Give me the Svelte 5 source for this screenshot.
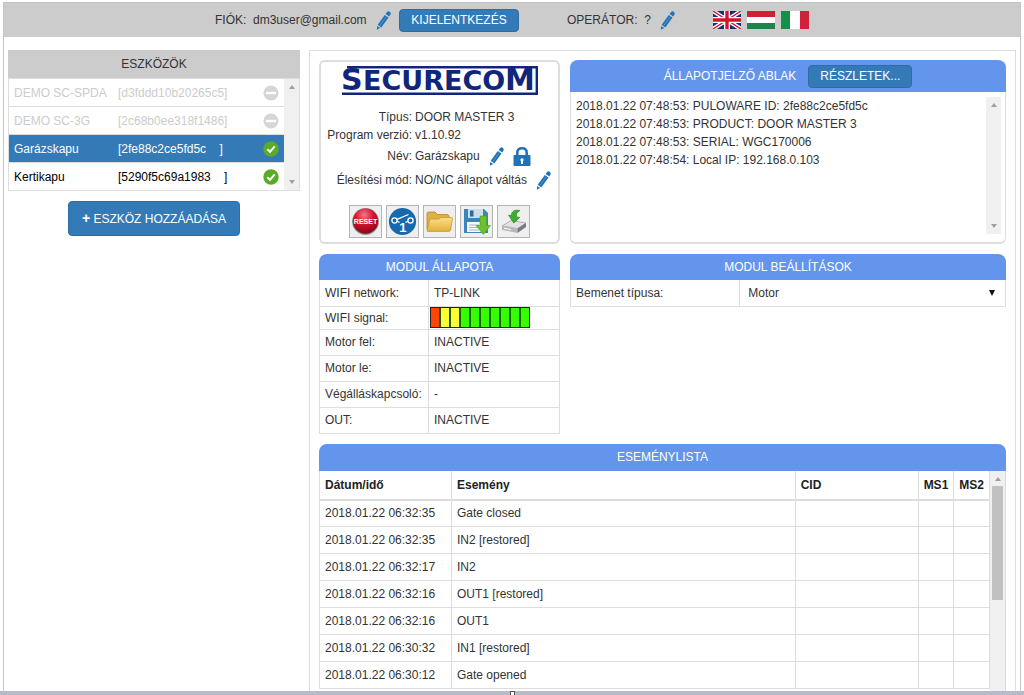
<script lang="ts">
    let devices = [
        { name: "DEMO SC-SPDA", id: "[d3fddd10b20265c5]", online: false },
        { name: "DEMO SC-3G", id: "[2c68b0ee318f1486]", online: false },
        { name: "Garázskapu", id: "[2fe88c2ce5fd5c    ]", online: true },
        { name: "Kertikapu", id: "[5290f5c69a1983    ]", online: true },
    ];
    let selected = 2;

    const log = [
        "2018.01.22 07:48:53: PULOWARE ID: 2fe88c2ce5fd5c",
        "2018.01.22 07:48:53: PRODUCT: DOOR MASTER 3",
        "2018.01.22 07:48:53: SERIAL: WGC170006",
        "2018.01.22 07:48:54: Local IP: 192.168.0.103",
    ];

    const signal = ["red", "yellow", "yellow", "green", "green", "green", "green", "green", "green", "green"];

    const states = [
        ["Motor fel:", "INACTIVE"],
        ["Motor le:", "INACTIVE"],
        ["Végálláskapcsoló:", "-"],
        ["OUT:", "INACTIVE"],
    ];

    const events = [
        ["2018.01.22 06:32:35", "Gate closed"],
        ["2018.01.22 06:32:35", "IN2 [restored]"],
        ["2018.01.22 06:32:17", "IN2"],
        ["2018.01.22 06:32:16", "OUT1 [restored]"],
        ["2018.01.22 06:32:16", "OUT1"],
        ["2018.01.22 06:30:32", "IN1 [restored]"],
        ["2018.01.22 06:30:12", "Gate opened"],
    ];

    let inputType = "Motor";
</script>

{#snippet pencil(label: string)}
    <button class="icon" aria-label={label}>
        <svg width="15" height="19" viewBox="0 0 15 19">
            <path fill="#2272b6" d="M.8 18.8 1.2 14.9 4.2 17.1zM1.7 13.8 8.8 3.9 12.5 6.5 5.3 16.4zM9.6 2.9 11.1 1Q12.2-.2 13.7.8 15.2 2 14.5 3.5L13.2 5.5z" />
            <path stroke="#6ba6d8" stroke-width=".7" d="M3.8 14.6 10.6 5.2" />
        </svg>
    </button>
{/snippet}

{#snippet arrow(dir: string)}
    <svg width="6" height="4" viewBox="0 0 6 4">
        <path d={dir === "up" ? "M0 4 3 0 6 4z" : "M0 0 3 4 6 0z"} fill="#a0a0a0" />
    </svg>
{/snippet}

<div class="app">
    <div class="page">
        <header>
            <span class="account">FIÓK: &nbsp;dm3user@gmail.com</span>
            {@render pencil("Fiók szerkesztése")}
            <button class="btn logout">KIJELENTKEZÉS</button>
            <span class="operator">OPERÁTOR: &nbsp;?</span>
            {@render pencil("Operátor szerkesztése")}
            <div class="flags">
                <button class="icon" aria-label="English">
                    <svg width="28" height="18" viewBox="0 0 28 18">
                        <rect width="28" height="18" fill="#1c2a78" />
                        <path d="M0 0 28 18M28 0 0 18" stroke="#fff" stroke-width="4" />
                        <path d="M0 0 28 18M28 0 0 18" stroke="#d0142c" stroke-width="1.4" />
                        <path d="M14 0V18M0 9H28" stroke="#fff" stroke-width="6" />
                        <path d="M14 0V18M0 9H28" stroke="#d0142c" stroke-width="3.4" />
                    </svg>
                </button>
                <button class="icon" aria-label="Magyar">
                    <svg width="28" height="18" viewBox="0 0 28 18">
                        <rect width="28" height="18" fill="#fff" />
                        <rect width="28" height="6" fill="#d21f35" />
                        <rect y="12" width="28" height="6" fill="#23824c" />
                    </svg>
                </button>
                <button class="icon" aria-label="Italiano">
                    <svg width="28" height="18" viewBox="0 0 28 18">
                        <rect width="28" height="18" fill="#fff" />
                        <rect width="9" height="18" fill="#159048" />
                        <rect x="19" width="9" height="18" fill="#d0203a" />
                    </svg>
                </button>
            </div>
        </header>

        <div class="content">
            <aside>
                <h2 class="grey">ESZKÖZÖK</h2>
                <div class="devices">
                    <ul>
                        {#each devices as device, i}
                            <li>
                                <button
                                    class="device"
                                    class:offline={!device.online}
                                    class:selected={i === selected}
                                    on:click={() => selected = i}
                                >
                                    <span class="name">{device.name}</span>
                                    <span class="id">{device.id}</span>
                                    <svg width="16" height="16" viewBox="0 0 16 16">
                                        {#if device.online}
                                            <circle cx="8" cy="8" r="7.7" fill="#5bab26" />
                                            <path d="M4.3 8.3 7 10.8 11.7 5.4" fill="none" stroke="#fff" stroke-width="2" />
                                        {:else}
                                            <circle cx="8" cy="8" r="7.5" fill="#d6d6d6" />
                                            <rect x="3" y="6.8" width="10" height="2.4" fill="#fff" />
                                        {/if}
                                    </svg>
                                </button>
                            </li>
                        {/each}
                    </ul>
                    <div class="scrollbar">
                        {@render arrow("up")}
                        {@render arrow("down")}
                    </div>
                </div>
                <button class="btn add"><b>+</b> ESZKÖZ HOZZÁADÁSA</button>
            </aside>

            <main>
                <div class="cards">
                    <section class="card product">
                        <svg class="logo" width="198" height="36" viewBox="0 -3 198 36" role="img" aria-label="Securecom">
                            <g fill="#10267c">
                                <path d="M6 0H197V29H1V26.6H194.6V2.6H6z" />
                                <text x="0" y="24" font-size="30">S</text>
                                <text x="22" y="24" font-size="27">ECURECO</text>
                                <text x="164" y="24" font-size="30">M</text>
                            </g>
                        </svg>
                        <dl>
                            <dt>Típus:</dt>
                            <dd>DOOR MASTER 3</dd>
                            <dt>Program verzió:</dt>
                            <dd>v1.10.92</dd>
                            <dt class="tall">Név:</dt>
                            <dd class="tall">
                                Garázskapu
                                {@render pencil("Név szerkesztése")}
                                <button class="icon" aria-label="Jelszó">
                                    <svg width="18" height="19" viewBox="0 0 18 19">
                                        <path d="M4.3 9V5.8Q4.3 1.3 9 1.3 13.7 1.3 13.7 5.8V9" fill="none" stroke="#2272b6" stroke-width="2.6" />
                                        <rect x="0.5" y="8" width="17" height="11" rx="1" fill="#2272b6" />
                                        <path d="M9 11.2a1.7 1.7 0 0 1 1 3V17H8v-2.8a1.7 1.7 0 0 1 1-3z" fill="#fff" />
                                    </svg>
                                </button>
                            </dd>
                            <dt class="tall">Élesítési mód:</dt>
                            <dd class="tall">
                                NO/NC állapot váltás
                                {@render pencil("Mód szerkesztése")}
                            </dd>
                        </dl>
                        <div class="tools">
                            <button aria-label="Reset">
                                <svg width="29" height="29" viewBox="0 0 29 29">
                                    <defs>
                                        <radialGradient id="ball" cx=".45" cy=".25" r=".8">
                                            <stop offset="0" stop-color="#f0788c" />
                                            <stop offset=".45" stop-color="#d4142f" />
                                            <stop offset="1" stop-color="#7c0515" />
                                        </radialGradient>
                                    </defs>
                                    <circle cx="14.5" cy="14.5" r="13.4" fill="#8f8f93" />
                                    <circle cx="14.5" cy="14.2" r="12.6" fill="url(#ball)" />
                                    <text x="14.5" y="17" font-size="7" text-anchor="middle" fill="#fff">RESET</text>
                                </svg>
                            </button>
                            <button aria-label="Kimenet 1">
                                <svg width="29" height="29" viewBox="0 0 29 29">
                                    <circle cx="14.5" cy="14.5" r="13.6" fill="#1769ad" />
                                    <g fill="none" stroke="#fff" stroke-width="1.3">
                                        <circle cx="6.5" cy="13.5" r="2.6" />
                                        <circle cx="22.5" cy="13.5" r="2.6" />
                                        <path d="M9 12.4 20.5 7.5M9 14 11.5 15.5M20 14.2 17.5 15.5" />
                                    </g>
                                    <text x="14.8" y="25" font-size="13" text-anchor="middle" fill="#fff">1</text>
                                </svg>
                            </button>
                            <button aria-label="Megnyitás">
                                <svg width="29" height="29" viewBox="0 0 29 29">
                                    <defs>
                                        <linearGradient id="folder" x2="0" y2="1">
                                            <stop offset="0" stop-color="#fbe08a" />
                                            <stop offset="1" stop-color="#e3b03a" />
                                        </linearGradient>
                                    </defs>
                                    <path d="M2 22V6.5Q2 5 3.5 5H10L12.5 7.5H22Q24 7.5 24 9.5V22z" fill="#dfb04a" stroke="#b98722" stroke-width=".8" />
                                    <path d="M2 24 4.5 13Q5 12 6.2 12L14 12 16 10.5H26Q28 10.5 27.4 12L25.6 23Q25.2 24.4 23.8 24.4H3Q2 24.4 2 24z" fill="url(#folder)" stroke="#c99529" stroke-width=".8" />
                                </svg>
                            </button>
                            <button aria-label="Mentés">
                                <svg width="29" height="29" viewBox="0 0 29 29">
                                    <path d="M2 2H22L26 6V26H2z" fill="#3a86bb" />
                                    <rect x="6" y="2" width="15" height="9" fill="#c9dfec" />
                                    <rect x="8" y="3.5" width="3.5" height="6" fill="#286a9b" />
                                    <rect x="5" y="15" width="18" height="10" fill="#fafafa" />
                                    <path d="M7 18H17M7 20.5H17M7 23H17" stroke="#a9b4bb" />
                                    <path d="M18 9H24.5V18.5H28.5L21.3 27.5 14 18.5H18z" fill="#6cc12f" stroke="#4c9d1c" stroke-width=".6" />
                                </svg>
                            </button>
                            <button aria-label="Letöltés">
                                <svg width="29" height="29" viewBox="0 0 29 29">
                                    <path d="M3 19 12 13.5 27 16 18.5 21.5z" fill="#e2e3e6" stroke="#8d8f94" stroke-width=".6" />
                                    <path d="M3 19 18.5 21.5V26L3 22.8z" fill="#b4b7bc" />
                                    <path d="M18.5 21.5 27 16V20L18.5 26z" fill="#777a80" />
                                    <path d="M5 21.2 12 22.6" stroke="#fff" stroke-width="1" />
                                    <path d="M21 3.5C16 2.5 12.5 4 12.4 8.6L9.6 8.2 14.8 16 20.8 10.5 17.4 9.8C17 7 18 5 21 3.5z" fill="#3fae2f" stroke="#268c1c" stroke-width=".7" />
                                </svg>
                            </button>
                        </div>
                    </section>

                    <section class="card status">
                        <div class="title">
                            <h2>ÁLLAPOTJELZŐ ABLAK</h2>
                            <button class="btn details">RÉSZLETEK...</button>
                        </div>
                        <div class="log">
                            <div class="lines">
                                {#each log as line}
                                    <p>{line}</p>
                                {/each}
                            </div>
                            <div class="scrollbar">
                                {@render arrow("up")}
                                {@render arrow("down")}
                            </div>
                        </div>
                    </section>

                    <section>
                        <h2 class="blue">MODUL ÁLLAPOTA</h2>
                        <table class="module">
                            <tbody>
                                <tr>
                                    <th>WIFI network:</th>
                                    <td>TP-LINK</td>
                                </tr>
                                <tr class="wifi">
                                    <th>WIFI signal:</th>
                                    <td>
                                        <div class="signal" role="img" aria-label="WIFI signal">
                                            {#each signal as color}
                                                <i class={color}></i>
                                            {/each}
                                        </div>
                                    </td>
                                </tr>
                                {#each states as [label, value]}
                                    <tr>
                                        <th>{label}</th>
                                        <td>{value}</td>
                                    </tr>
                                {/each}
                            </tbody>
                        </table>
                    </section>

                    <section>
                        <h2 class="blue">MODUL BEÁLLÍTÁSOK</h2>
                        <div class="setting">
                            <label for="input-type">Bemenet típusa:</label>
                            <div class="select">
                                <select id="input-type" bind:value={inputType}>
                                    <option>Motor</option>
                                </select>
                                <svg width="6" height="6" viewBox="0 0 6 6"><path d="M0 0H6L3 6z" fill="#111" /></svg>
                            </div>
                        </div>
                    </section>
                </div>

                <section class="events">
                    <h2 class="blue">ESEMÉNYLISTA</h2>
                    <div class="list">
                        <table>
                            <thead>
                                <tr>
                                    <th class="date">Dátum/idő</th>
                                    <th>Esemény</th>
                                    <th class="cid">CID</th>
                                    <th class="ms">MS1</th>
                                    <th class="ms">MS2</th>
                                </tr>
                            </thead>
                            <tbody>
                                {#each events as [date, text]}
                                    <tr>
                                        <td>{date}</td>
                                        <td>{text}</td>
                                        <td></td>
                                        <td></td>
                                        <td></td>
                                    </tr>
                                {/each}
                            </tbody>
                        </table>
                        <div class="scrollbar long">
                            {@render arrow("up")}
                            <div class="thumb"></div>
                        </div>
                    </div>
                </section>
            </main>
        </div>
    </div>
    <footer><span></span></footer>
</div>

<style>
    :global(body) {
        margin: 0;
        background-color: #fff;
    }

    * {
        box-sizing: border-box;
    }

    .app {
        height: 100vh;
        padding-top: 2px;
        display: flex;
        flex-direction: column;
        overflow: hidden;

        font-family: "Liberation Sans", Arial, sans-serif;
        font-size: 12px;
        line-height: 18px;
        color: #333;
    }

    .page {
        flex: 1;
        min-height: 0;
        margin: 0 3px;
        display: flex;
        flex-direction: column;

        border: 1px solid #c4c4c4;
        border-bottom: none;
    }

    button,
    select {
        font: inherit;
        color: inherit;
        cursor: pointer;
    }
    h2,
    p,
    ul,
    dl,
    dd {
        margin: 0;
        padding: 0;
        font-size: 12px;
        font-weight: normal;
    }
    svg {
        display: block;
        flex: none;
    }
    .icon {
        padding: 0;
        border: none;
        background: none;
    }

    .btn {
        border: 1px solid #2e6da4;
        border-radius: 4px;
        padding: 0;
        background-color: #337ab7;
        color: #fff;
    }

    /* top bar */
    header {
        flex: none;
        height: 34px;
        display: flex;
        align-items: center;
        justify-content: center;
        gap: 8px;

        background-color: #ccc;
    }
    .account {
        min-width: 153px;
    }
    .logout {
        width: 120px;
        height: 23px;
        line-height: 20px;
    }
    .operator {
        min-width: 85px;
        margin-left: 40px;
    }
    .flags {
        display: flex;
        gap: 6px;
        margin-left: 30px;
    }

    .content {
        flex: 1;
        min-height: 0;
        padding: 13px 4px 0 4px;
        display: flex;
        gap: 9px;
    }

    /* devices */
    aside {
        flex: 0 0 292px;
        display: flex;
        flex-direction: column;
    }
    .grey {
        line-height: 28px;
        background-color: #ccc;
        text-align: center;
    }
    .devices {
        display: flex;
        border: 1px solid #ddd;
    }
    ul {
        flex: 1;
        list-style: none;
    }
    li + li {
        border-top: 1px solid #ddd;
    }
    .device {
        width: 100%;
        height: 27px;
        padding: 0 5px;
        display: flex;
        align-items: center;

        border: none;
        background-color: #fff;
        color: #000;
        text-align: left;
    }
    .device.offline {
        color: #ccc;
    }
    .device.selected {
        background-color: #337ab7;
        color: #fff;
    }
    .name {
        flex: 0 0 104px;
    }
    .id {
        flex: 1;
        white-space: pre;
    }
    .add {
        align-self: center;
        width: 172px;
        height: 35px;
        margin-top: 10px;
    }
    .add b {
        font-size: 14px;
    }

    .scrollbar {
        flex: none;
        width: 15px;
        padding: 6px 0;
        display: flex;
        flex-direction: column;
        align-items: center;
        justify-content: space-between;

        background-color: #f0f0f0;
    }

    main {
        flex: 1;
        min-width: 0;
        padding: 9px 9px 0 9px;
        display: flex;
        flex-direction: column;

        border: 1px solid #ddd;
        border-bottom: none;
    }
    .cards {
        display: grid;
        grid-template-columns: 241px 1fr;
        gap: 10px;
    }
    .card {
        min-height: 184px;
        border: 2px solid #ddd;
        border-radius: 6px;
    }

    /* product card */
    .product {
        display: flex;
        flex-direction: column;
        align-items: center;
    }
    .logo {
        margin-top: 1px;
        font-family: "DejaVu Sans", sans-serif;
        font-weight: bold;
    }
    dl {
        width: 100%;
        margin-top: 9px;
        display: grid;
        grid-template-columns: 91px 1fr;
        column-gap: 3px;
    }
    dt {
        text-align: right;
        white-space: nowrap;
    }
    dd {
        display: flex;
        align-items: center;
        gap: 9px;
        white-space: nowrap;
    }
    .tall {
        line-height: 24px;
    }
    .tools {
        display: flex;
        gap: 4px;
        margin-top: 13px;
    }
    .tools button {
        width: 33px;
        height: 33px;
        padding: 1px;
        border: 1px solid #b4b4b4;
        background-color: #efefef;
    }
    .tools text {
        font-weight: bold;
    }

    /* status card */
    .status {
        display: flex;
        flex-direction: column;
        border-width: 0 1px 2px 1px;
    }
    .title {
        height: 32px;
        margin: 0 -1px;
        display: flex;
        align-items: center;
        justify-content: center;
        gap: 12px;

        border-radius: 8px 8px 0 0;
        background-color: #6495ed;
        color: #fff;
    }
    .details {
        width: 104px;
        height: 23px;
        line-height: 20px;
    }
    .log {
        flex: 1;
        padding: 5px 4px 8px 5px;
        display: flex;
        justify-content: space-between;
    }

    .blue {
        border-radius: 8px 8px 0 0;
        background-color: #6495ed;
        color: #fff;
        line-height: 26px;
        text-align: center;
    }

    table {
        width: 100%;
        border-collapse: collapse;
        table-layout: fixed;
    }
    th,
    td {
        height: 26px;
        padding: 0 5px;
        border: 1px solid #ddd;
        text-align: left;
        line-height: 18px;
        white-space: nowrap;
    }
    .module tr:first-child > * {
        border-top: none;
    }
    .module th {
        width: 109px;
        padding-right: 0;
        font-weight: normal;
    }
    .module .wifi > * {
        height: 23px;
    }
    .module .wifi td {
        padding: 0 1px;
    }
    .signal {
        width: 100px;
        height: 21px;
        display: flex;
        gap: 2px;
        border: 1px solid #222;
        background-color: #1b5a10;
    }
    .signal i {
        flex: 1;
    }
    .signal .red {
        background-color: #ff4500;
    }
    .signal .yellow {
        background-color: #ffff33;
    }
    .signal .green {
        background-color: #33ff00;
    }

    .setting {
        height: 27px;
        display: flex;
        align-items: stretch;
        border: 1px solid #ddd;
        border-top: none;
        line-height: 26px;
    }
    .setting label {
        flex: 0 0 39%;
        padding-left: 5px;
        border-right: 1px solid #ddd;
    }
    .select {
        flex: 1;
        display: flex;
        align-items: center;
        padding-right: 10px;
    }
    select {
        flex: 1;
        height: 26px;
        padding: 0 8px;
        border: none;
        background: none;
        appearance: none;
    }

    /* events */
    .events {
        flex: 1;
        min-height: 0;
        margin-top: 10px;
        display: flex;
        flex-direction: column;
    }
    .events .blue {
        line-height: 27px;
    }
    .list {
        flex: 1;
        min-height: 0;
        display: flex;
        align-items: flex-start;
        border-right: 1px solid #ddd;
        overflow: hidden;
    }
    .list table {
        flex: 1;
        width: auto;
    }
    .list td {
        height: 27px;
    }
    .list th {
        height: 29px;
        border-top: none;
        border-bottom-width: 2px;
        color: #222;
    }
    .date {
        width: 132px;
    }
    .cid {
        width: 123px;
    }
    .ms {
        width: 35px;
    }
    .long {
        align-self: stretch;
        justify-content: flex-start;
        gap: 5px;
    }
    .thumb {
        width: 11px;
        height: 114px;
        background-color: #c1c1c1;
    }

    footer {
        flex: none;
        height: 4px;
        display: flex;
        justify-content: center;
        background-color: #b4bccb;
    }
    footer span {
        width: 5px;
        border: 1px solid #555;
        border-bottom: none;
        background-color: #fff;
    }
</style>
